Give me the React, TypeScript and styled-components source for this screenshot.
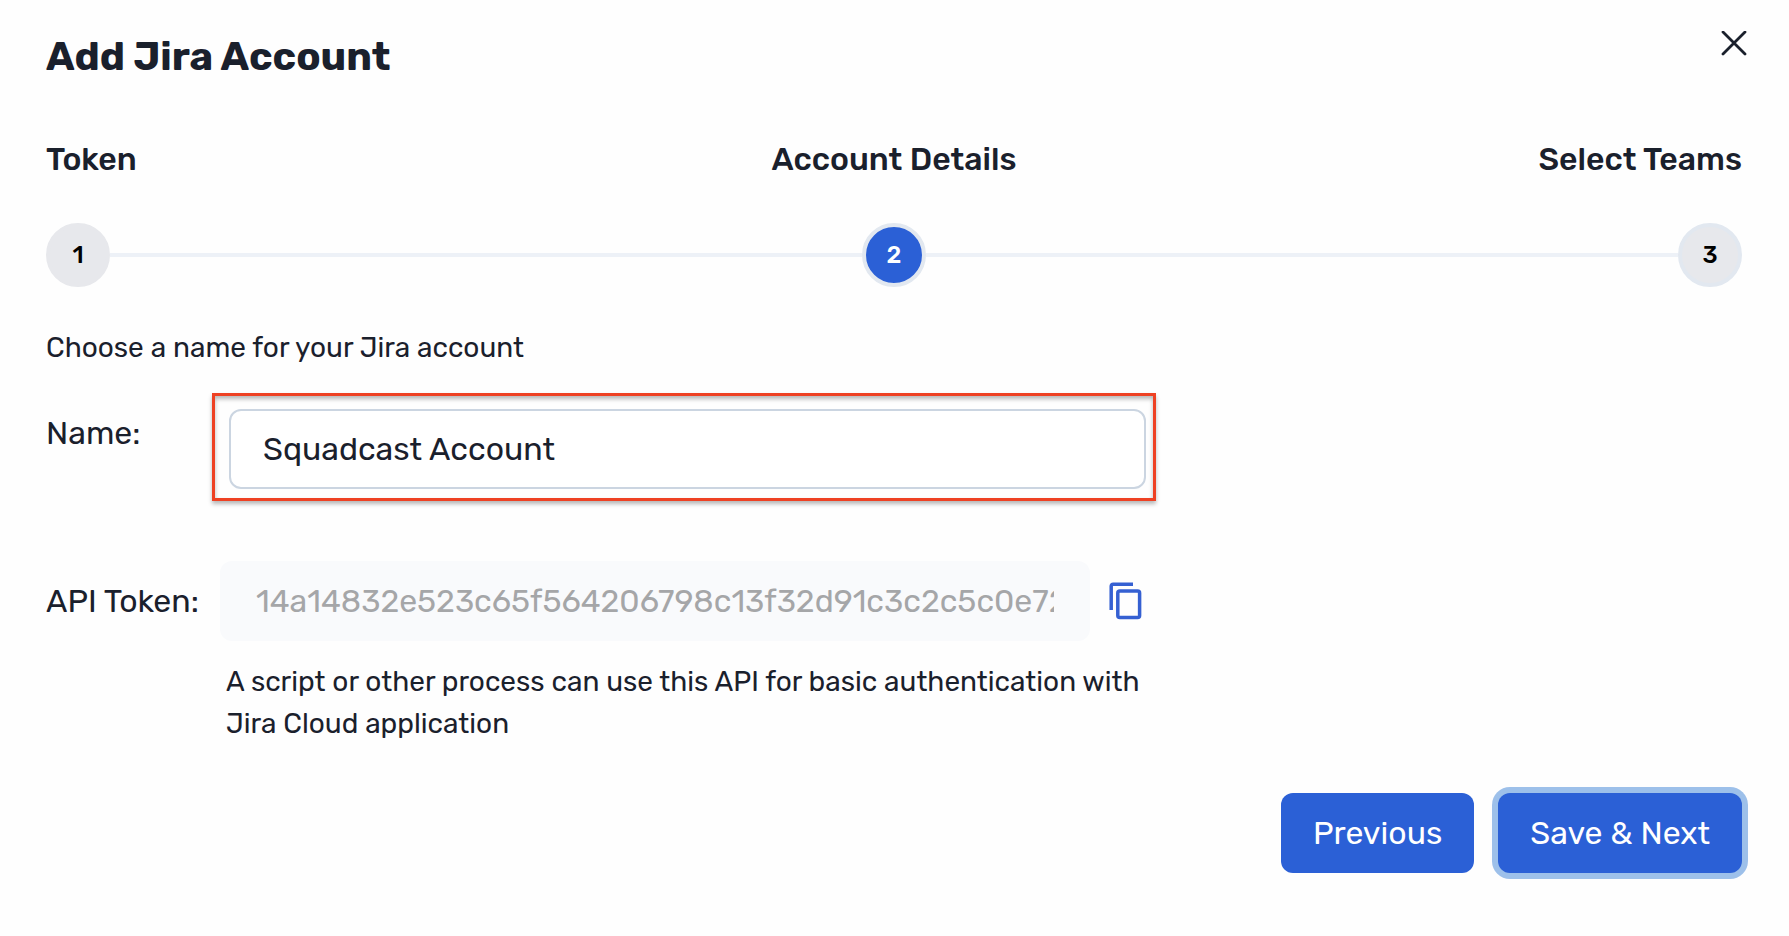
import React, { useState } from "react";
import styled, { createGlobalStyle, css } from "styled-components";

const ink = "#1a202c";
const blue = "#2b60d6";

const GlobalStyle = createGlobalStyle`
  *, *::before, *::after { box-sizing: border-box; }
  body {
    margin: 0;
    background: #fefefe;
    color: ${ink};
    font-family: Rubik, Inter, "Liberation Sans", sans-serif;
    font-size: 32px;
    line-height: 40px;
  }
  button, input { font: inherit; }
`;

const Dialog = styled.main`
  padding: 31px 47px 62px 46px;
`;

const Header = styled.header`
  display: flex;
  justify-content: space-between;
  align-items: flex-start;
  margin-bottom: 56px;
`;

const Title = styled.h1`
  margin: 0;
  font-size: 40px;
  line-height: 52px;
  font-weight: 700;
`;

const IconButton = styled.button`
  display: flex;
  flex: none;
  padding: 0;
  border: 0;
  background: none;
  color: inherit;
  cursor: pointer;
`;

const CloseButton = styled(IconButton)`
  margin-right: -6px;
`;

const CopyButton = styled(IconButton)`
  margin: 0 14px 0 19px;
  color: #3560d2;
`;

const StepLabels = styled.div`
  display: grid;
  grid-template-columns: 1fr auto 1fr;
  margin-bottom: 44px;
`;

const StepLabel = styled.div`
  font-weight: 500;

  &:last-child {
    text-align: right;
  }
`;

const StepTrack = styled.div`
  display: flex;
  align-items: center;
  margin-bottom: 41px;
`;

const StepLine = styled.div`
  flex: 1;
  height: 4px;
  background: #edf1f7;
`;

const StepCircle = styled.div<{ $state: "done" | "active" | "next" }>`
  display: flex;
  align-items: center;
  justify-content: center;
  width: 64px;
  height: 64px;
  border: 4px solid #e2e8f0;
  border-radius: 50%;
  background: #e7e8ec;
  color: #000;
  font-size: 24px;
  line-height: 32px;
  font-weight: 500;
  ${(p) => p.$state === "done" && css`border-color: #e7e8ec;`}
  ${(p) => p.$state === "active" && css`background: ${blue}; color: #fff;`}
`;

const Form = styled.form`
  display: flex;
  flex-direction: column;
`;

const Fields = styled.div`
  max-width: 1110px;
`;

const Intro = styled.p`
  margin: 0 0 25px;
  font-size: 28px;
`;

const NameRow = styled.div`
  display: grid;
  grid-template-columns: 166px 1fr;
  margin-bottom: 60px;
`;

const TokenRow = styled.div`
  display: grid;
  grid-template-columns: 174px 1fr auto;
  align-items: center;
`;

const Label = styled.label`
  white-space: nowrap;
`;

const NameLabel = styled(Label)`
  padding-top: 20px;
`;

const Highlight = styled.div`
  padding: 13px 7px 9px 14px;
  border: 3px solid #ee4123;
  box-shadow: 0 3px 4px rgba(0, 0, 0, 0.28), inset 0 3px 4px rgba(0, 0, 0, 0.28);
`;

const TextInput = styled.input`
  display: block;
  width: 100%;
  min-width: 0;
  height: 80px;
  padding: 0 32px;
  border: 2px solid #cbd5e1;
  border-radius: 12px;
  background: #fff;
  color: ${ink};
  outline: none;
`;

const TokenInput = styled(TextInput)`
  padding: 0 34px;
  border-color: #f9fafc;
  background: #f9fafc;
  color: #a5a6a8;
`;

const Help = styled.p`
  margin: 20px 0 48px 180px;
  font-size: 28px;
  line-height: 42px;
`;

const Actions = styled.div`
  display: flex;
  justify-content: flex-end;
  gap: 24px;
`;

const ActionButton = styled.button<{ $ring?: boolean }>`
  height: 80px;
  padding: 0 32px;
  border: 0;
  border-radius: 12px;
  background: ${blue};
  color: #fff;
  cursor: pointer;
  outline: none;
  box-shadow: ${(p) => (p.$ring ? "0 0 0 6px #9dc0ea" : "none")};
`;

const CloseIcon = () => (
  <svg width="28" height="28" viewBox="0 0 28 28" fill="none" stroke="currentColor" strokeWidth="2.8" strokeLinecap="round" aria-hidden="true">
    <path d="M3 1 25 23M25 1 3 23" />
  </svg>
);

const CopyIcon = () => (
  <svg width="33" height="38" viewBox="0 0 33 38" fill="none" stroke="currentColor" strokeWidth="3.5" aria-hidden="true">
    <path d="M24 2.2H4.2Q2.2 2.2 2.2 4.2V28" />
    <rect x="8.8" y="9" width="21.8" height="26.5" rx="2" />
  </svg>
);

export default function App() {
  const [name, setName] = useState("Squadcast Account");

  return (
    <>
      <GlobalStyle />
      <Dialog>
        <Header>
          <Title>Add Jira Account</Title>
          <CloseButton type="button" aria-label="Close">
            <CloseIcon />
          </CloseButton>
        </Header>

        <StepLabels>
          <StepLabel>Token</StepLabel>
          <StepLabel>Account Details</StepLabel>
          <StepLabel>Select Teams</StepLabel>
        </StepLabels>
        <StepTrack>
          <StepCircle $state="done">1</StepCircle>
          <StepLine />
          <StepCircle $state="active">2</StepCircle>
          <StepLine />
          <StepCircle $state="next">3</StepCircle>
        </StepTrack>

        <Form onSubmit={(e) => e.preventDefault()}>
          <Fields>
            <Intro>Choose a name for your Jira account</Intro>
            <NameRow>
              <NameLabel htmlFor="account-name">Name:</NameLabel>
              <Highlight>
                <TextInput id="account-name" value={name} onChange={(e) => setName(e.target.value)} />
              </Highlight>
            </NameRow>
            <TokenRow>
              <Label htmlFor="api-token">API Token:</Label>
              <TokenInput id="api-token" readOnly value="14a14832e523c65f564206798c13f32d91c3c2c5c0e72" />
              <CopyButton type="button" aria-label="Copy API token">
                <CopyIcon />
              </CopyButton>
            </TokenRow>
            <Help>A script or other process can use this API for basic authentication with Jira Cloud application</Help>
          </Fields>
          <Actions>
            <ActionButton type="button">Previous</ActionButton>
            <ActionButton type="submit" $ring>Save &amp; Next</ActionButton>
          </Actions>
        </Form>
      </Dialog>
    </>
  );
}
